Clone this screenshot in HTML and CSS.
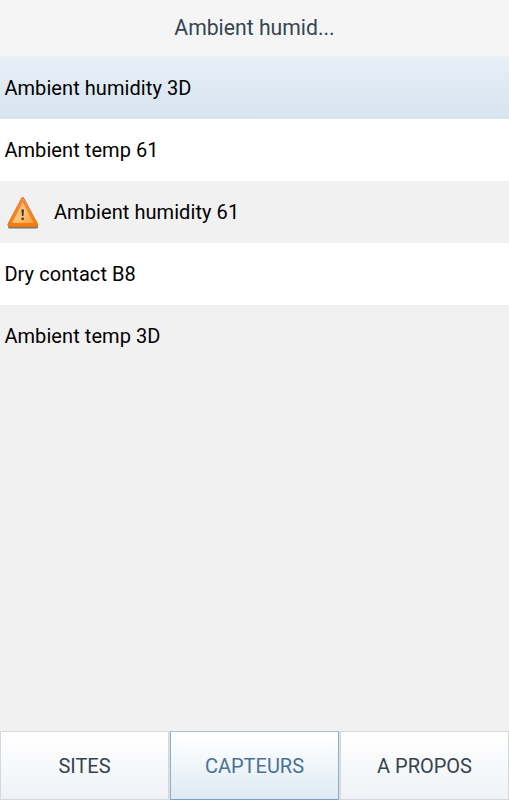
FILE: index.html
```html
<!DOCTYPE html>
<html lang="fr">
<head>
<meta charset="utf-8">
<title>Capteurs</title>
<link rel="stylesheet" href="styles.css">
</head>
<body>
<header class="title"><span>Ambient humid...</span></header>
<ul class="list">
<li class="row selected"><span>Ambient humidity 3D</span></li>
<li class="row"><span>Ambient temp 61</span></li>
<li class="row alt warning">
<svg class="icon" width="36" height="36" viewBox="0 0 36 36" aria-hidden="true">
<defs>
<linearGradient id="edge" x1="0" y1="0" x2="0" y2="1"><stop offset="0" stop-color="#ed8c48"/><stop offset="1" stop-color="#fb7b06"/></linearGradient>
<linearGradient id="face" x1="0" y1="0" x2="1" y2="1"><stop offset="0" stop-color="#f5a04e"/><stop offset=".5" stop-color="#fbc67a"/><stop offset="1" stop-color="#fba13c"/></linearGradient>
<filter id="soft" x="-10%" y="-100%" width="120%" height="300%"><feGaussianBlur stdDeviation=".7"/></filter>
</defs>
<rect x="4" y="31" width="30" height="3.500" rx="1.500" fill="#777" filter="url(#soft)"/>
<path d="M18.700 4.500L32.500 30.500Q33 31.500 31.500 31.500H6Q4.500 31.500 5 30.500Z" fill="url(#edge)" stroke="#d9712a" stroke-width="3" stroke-linejoin="round"/>
<path d="M18.700 4.500L32.500 30.500Q33 31.500 31.500 31.500H6Q4.500 31.500 5 30.500Z" fill="url(#edge)" stroke="url(#edge)" stroke-width="1.800" stroke-linejoin="round"/>
<path d="M18.700 8L29.500 29H8Z" fill="url(#face)"/>
<path d="M17.400 15.500h2.600l-.6 6.500h-1.400z" fill="#3b3632"/><circle cx="18.700" cy="24.800" r="1.300" fill="#3b3632"/>
</svg>
<span>Ambient humidity 61</span></li>
<li class="row"><span>Dry contact B8</span></li>
<li class="row alt"><span>Ambient temp 3D</span></li>
</ul>
<nav class="tabs">
<div class="tab"><span>SITES</span></div>
<div class="tab active"><span>CAPTEURS</span></div>
<div class="tab"><span>A PROPOS</span></div>
</nav>
</body>
</html>
```
FILE: styles.css
```css
* { box-sizing: border-box; }
body { margin: 0; height: 800px; display: flex; flex-direction: column; background: #f1f1f1; font: 20px/24px Roboto, sans-serif; color: #000; overflow: hidden; white-space: nowrap; }
.title { height: 56px; display: flex; align-items: center; justify-content: center; background: #f5f5f5; color: #344552; font-size: 21.2px; }
.list { flex: 1; list-style: none; margin: 0; padding: 0; }
.row { height: 62px; display: flex; align-items: center; padding-left: 4.4px; background: #fff; letter-spacing: .07px; }
.selected { height: 63px; background: linear-gradient(#e8f0f8, #d7e3ef); }
.alt { background: #f1f1f1; }
.warning { padding-left: 4px; }
.icon { margin: -1px 14px 0 0; }
.tabs { height: 69px; display: grid; grid-template-columns: repeat(3, 1fr); gap: 1px; background: #dde2e6; }
.tab { display: flex; align-items: center; justify-content: center; border: 1px solid #d3d8dc; background: linear-gradient(#fff, #f0f2f7); color: #35434f; }
.active { border-color: #aac4d6 #8eaec5 #7da0bc; background: linear-gradient(#fff 10%, #eef4f9 55%, #dceaf3); color: #4a7292; }
```
